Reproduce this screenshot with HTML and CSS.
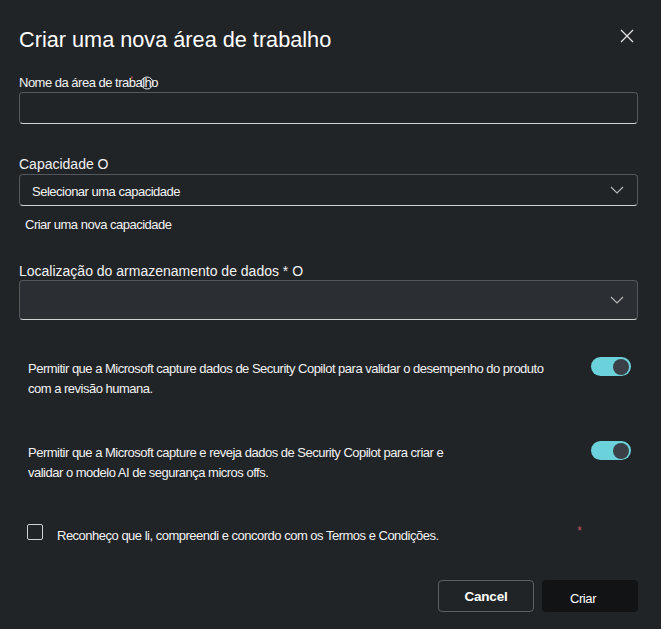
FILE: index.html
```html
<!DOCTYPE html>
<html lang="pt">
<head>
<meta charset="utf-8">
<title>Criar uma nova área de trabalho</title>
<link rel="stylesheet" href="styles.css">
</head>
<body>
<div class="dialog">
  <header class="head">
    <h1 class="title">Criar uma nova área de trabalho</h1>
    <button class="close" aria-label="Fechar">
      <svg width="14" height="14" viewBox="0 0 14 14"><path d="M1 1 L13 13 M13 1 L1 13" stroke="#e6e6e6" stroke-width="1.2" fill="none"/></svg>
    </button>
  </header>

  <div class="lbl-sm lbl-name">Nome da área de trabalho<span class="req-mini">*</span><svg class="cursor-ring" width="14" height="14" viewBox="0 0 14 14"><circle cx="7" cy="7" r="6" stroke="#e6e6e6" stroke-width="1" fill="none"/></svg></div>
  <div class="input"></div>

  <div class="lbl-lg lbl-cap">Capacidade O</div>
  <div class="select">
    <span class="select-text">Selecionar uma capacidade</span>
    <svg class="chev" width="14" height="8" viewBox="0 0 14 8"><path d="M1 1 L7 7 L13 1" stroke="#b5b5b5" stroke-width="1.2" fill="none"/></svg>
  </div>
  <div class="link">Criar uma nova capacidade</div>

  <div class="lbl-lg lbl-loc">Localização do armazenamento de dados * O</div>
  <div class="select select-tall">
    <span class="select-text"></span>
    <svg class="chev" width="14" height="8" viewBox="0 0 14 8"><path d="M1 1 L7 7 L13 1" stroke="#b5b5b5" stroke-width="1.2" fill="none"/></svg>
  </div>

  <div class="opt opt1">
    <p class="opt-text">Permitir que a Microsoft capture dados de Security Copilot para validar o desempenho do produto<br>com a revisão humana.</p>
    <span class="toggle"><span class="knob"></span></span>
  </div>

  <div class="opt opt2">
    <p class="opt-text">Permitir que a Microsoft capture e reveja dados de Security Copilot para criar e<br>validar o modelo AI de segurança micros offs.</p>
    <span class="toggle"><span class="knob"></span></span>
  </div>

  <div class="check-row">
    <span class="checkbox"></span>
    <span class="check-text">Reconheço que li, compreendi e concordo com os Termos e Condições.</span>
    <span class="req">*</span>
  </div>

  <footer class="actions">
    <button class="btn btn-cancel">Cancel</button>
    <button class="btn btn-primary">Criar</button>
  </footer>
</div>
</body>
</html>
```

FILE: styles.css
```css
html, body {
  margin: 0;
  padding: 0;
  background: #212427;
}
body {
  font-family: "Liberation Sans", Arial, sans-serif;
  color: #ffffff;
  width: 661px;
  height: 629px;
  overflow: hidden;
}
.dialog {
  display: flex;
  flex-direction: column;
  padding: 26px 23px 0 19px;
}
.head {
  display: flex;
  justify-content: space-between;
  align-items: flex-start;
  height: 28px;
}
.title {
  margin: 0;
  font-size: 21.7px;
  line-height: 28px;
  font-weight: normal;
  color: #ffffff;
}
.close {
  background: none;
  border: none;
  padding: 0;
  margin: 3px 4px 0 0;
  width: 14px;
  height: 14px;
  display: flex;
}
.lbl-sm {
  font-size: 13px;
  line-height: 16px;
  letter-spacing: -0.5px;
  color: #f2f2f2;
}
.lbl-name {
  position: relative;
  margin-top: 21px;
  margin-bottom: 1px;
  height: 16px;
}
.req-mini {
  position: absolute;
  left: 111px;
  top: -4px;
  font-size: 8px;
  color: #c4525a;
}
.cursor-ring {
  position: absolute;
  left: 121px;
  top: 1px;
}
.input {
  height: 30px;
  border: 1px solid #54575c;
  border-bottom-color: #d2d2d2;
  border-radius: 4px;
}
.lbl-lg {
  font-size: 14px;
  line-height: 20px;
  color: #f2f2f2;
}
.lbl-cap {
  margin-top: 30px;
}
.select {
  display: flex;
  align-items: center;
  justify-content: space-between;
  height: 30px;
  border: 1px solid #54575c;
  border-bottom-color: #d2d2d2;
  border-radius: 4px;
  padding: 0 13px 0 12px;
}
.select-text {
  font-size: 13px;
  letter-spacing: -0.5px;
  color: #f2f2f2;
  padding-top: 2px;
}
.select-tall {
  height: 38px;
  background: #2b2e32;
}
.chev {
  display: block;
}
.link {
  margin-top: 11px;
  padding-left: 6px;
  font-size: 13px;
  line-height: 16px;
  letter-spacing: -0.5px;
  color: #f2f2f2;
}
.lbl-loc {
  margin-top: 29px;
  line-height: 18px;
}
.opt {
  display: flex;
  justify-content: space-between;
  align-items: flex-start;
  padding: 0 7px 0 9px;
}
.opt1 {
  margin-top: 39px;
}
.opt2 {
  margin-top: 44px;
}
.opt-text {
  margin: 0;
  font-size: 13px;
  line-height: 20px;
  letter-spacing: -0.5px;
  color: #f2f2f2;
}
.toggle {
  position: relative;
  flex: none;
  width: 40px;
  height: 19px;
  margin-top: -2px;
  border-radius: 10px;
  background: #6bd2dc;
}
.knob {
  position: absolute;
  right: 2px;
  top: 1.5px;
  width: 16px;
  height: 16px;
  border-radius: 50%;
  background: #3b4047;
}
.check-row {
  display: flex;
  align-items: flex-start;
  margin-top: 41px;
  padding: 0 56px 0 8px;
}
.checkbox {
  flex: none;
  width: 14px;
  height: 14px;
  border: 1px solid #d0d0d0;
  border-radius: 2px;
}
.check-text {
  margin-left: 14px;
  margin-top: 4px;
  font-size: 13px;
  line-height: 16px;
  letter-spacing: -0.5px;
  color: #f2f2f2;
}
.req {
  margin-left: auto;
  margin-top: 1px;
  font-size: 12px;
  line-height: 12px;
  color: #c4525a;
}
.actions {
  display: flex;
  justify-content: flex-end;
  gap: 8px;
  margin-top: 36px;
}
.btn {
  width: 96px;
  height: 32px;
  border-radius: 4px;
  font-family: "Liberation Sans", Arial, sans-serif;
  color: #ffffff;
  padding: 0;
}
.btn-cancel {
  background: #212427;
  border: 1px solid #5c5f63;
  font-size: 13.5px;
  font-weight: bold;
  letter-spacing: -0.2px;
}
.btn-primary {
  background: #111315;
  border: none;
  font-size: 13px;
  letter-spacing: -0.4px;
  padding: 5px 14px 0 0;
}
```
